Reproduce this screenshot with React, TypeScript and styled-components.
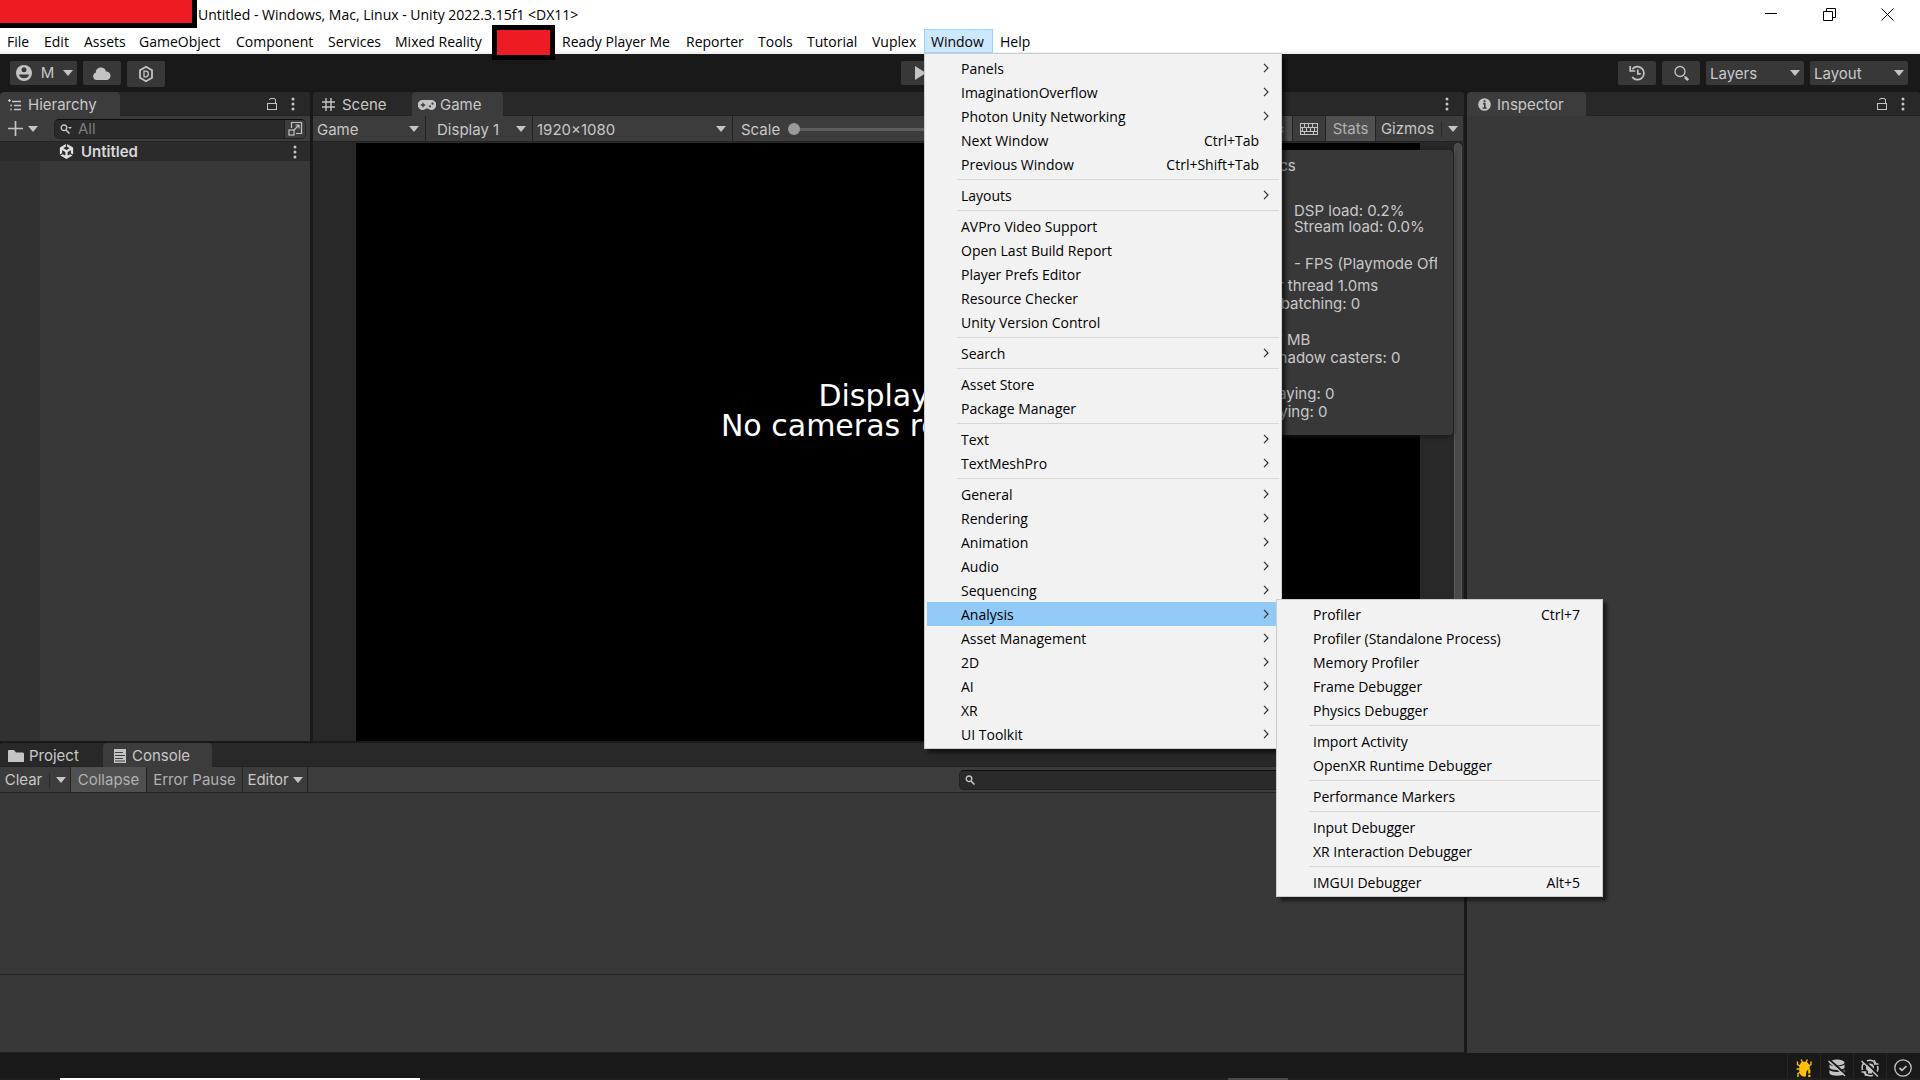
import React from "react";
import styled, { createGlobalStyle } from "styled-components";
import { SiUnity } from "react-icons/si";

const GlobalStyle = createGlobalStyle`
  *, *::before, *::after { box-sizing: border-box; }
  body { margin: 0; background: #191919; }
  button, input, select { font: inherit; color: inherit; margin: 0; padding: 0; border: 0; background: none; }
  ul { margin: 0; padding: 0; list-style: none; }
`;

const systemFont = `"Open Sans", "Noto Sans", sans-serif`;
const editorFont = `Inter, Roboto, sans-serif`;

const Shell = styled.div`
  min-height: 100vh;
  display: flex;
  flex-direction: column;
  overflow: hidden;
  background: #191919;
  color: #c8c8c8;
  font-family: ${editorFont};
  font-size: 15px;
  line-height: 18px;
`;

/* ---------- window chrome ---------- */

const TitleBar = styled.header`
  height: 28px;
  display: flex;
  background: #fff;
  color: #000;
  font-family: ${systemFont};
  font-size: 14px;
`;

const TitleRedaction = styled.div`
  width: 197px;
  height: 28px;
  background: #ed1c24;
  border: solid #000;
  border-width: 0 5px 5px 0;
`;

const WindowTitle = styled.h1`
  flex: 1;
  margin: 0;
  padding-left: 1px;
  font-size: 14px;
  font-weight: 400;
  line-height: 30px;
`;

const WindowButtons = styled.div`
  display: flex;
  padding-right: 4px;
`;

const WindowButton = styled.button`
  width: 58px;
  height: 28px;
  display: grid;
  place-items: center;
`;

const MenuBar = styled.nav`
  height: 26px;
  display: flex;
  background: #fff;
  border-bottom: 2px solid #f0f0f0;
  color: #000;
  font-family: ${systemFont};
  font-size: 14px;
`;

const MenuSlot = styled.div`
  position: relative;
  z-index: 10;
  padding-top: 1px;
`;

const MenuButton = styled.button<{ $width: number; $open?: boolean }>`
  width: ${(p) => p.$width}px;
  height: 24px;
  padding: 1px 0 0 6px;
  text-align: left;
  white-space: nowrap;
  border: 1px solid ${(p) => (p.$open ? "#99d1ff" : "transparent")};
  background: ${(p) => (p.$open ? "#cce8ff" : "transparent")};
`;

const MenuRedaction = styled.div`
  width: 63px;
  height: 35px;
  margin-top: -3px;
  position: relative;
  z-index: 2;
  background: #ed1c24;
  border: 5px solid #000;
`;

const PopupMenu = styled.ul<{ $nested?: boolean }>`
  position: absolute;
  z-index: 20;
  top: ${(p) => (p.$nested ? "-3px" : "25px")};
  left: ${(p) => (p.$nested ? "349px" : "0")};
  width: ${(p) => (p.$nested ? 327 : 358)}px;
  padding: 2px;
  background: #f2f2f2;
  border: 1px solid #ccc;
  box-shadow: 4px 4px 3px rgba(0, 0, 0, 0.5);
`;

const PopupItem = styled.li`
  position: relative;
`;

const PopupButton = styled.button<{ $active?: boolean }>`
  width: 100%;
  height: 24px;
  display: flex;
  align-items: center;
  justify-content: space-between;
  padding: 0 20px 0 34px;
  text-align: left;
  white-space: nowrap;
  background: ${(p) => (p.$active ? "#91c9f7" : "transparent")};

  span { padding-top: 2px; }
  svg { margin-right: -10px; }
`;

const PopupDivider = styled.li`
  height: 1px;
  margin: 3px 0 3px 30px;
  background: #d7d7d7;
`;

/* ---------- editor toolbar ---------- */

const EditorToolbar = styled.div`
  height: 38px;
  display: grid;
  grid-template-columns: 1fr auto 1fr;
  align-items: start;
  padding: 7px 12px 0 10px;
`;

const ToolGroup = styled.div<{ $tight?: boolean; $end?: boolean }>`
  display: flex;
  justify-content: ${(p) => (p.$end ? "flex-end" : "flex-start")};
  gap: ${(p) => (p.$tight ? 1 : 6)}px;
`;

const ToolButton = styled.button<{ $tall?: boolean; $wide?: boolean }>`
  width: ${(p) => (p.$wide ? 67 : 38)}px;
  height: ${(p) => (p.$tall ? 26 : 24)}px;
  display: flex;
  align-items: center;
  justify-content: ${(p) => (p.$wide ? "space-between" : "center")};
  padding: ${(p) => (p.$wide ? "0 4px 0 6px" : "0")};
  background: #383838;
  border-radius: 2px;
`;

const Caret = styled.span`
  width: 0;
  height: 0;
  border: solid transparent;
  border-width: 6px 5px 0;
  border-top-color: #c4c4c4;
`;

const SelectBox = styled.label<{ $width: number; $raised?: boolean }>`
  position: relative;
  width: ${(p) => p.$width}px;
  height: ${(p) => (p.$raised ? "24px" : "100%")};
  display: flex;
  align-items: center;
  background: ${(p) => (p.$raised ? "#383838" : "transparent")};
  border-radius: ${(p) => (p.$raised ? 2 : 0)}px;
  border-right: ${(p) => (p.$raised ? "0" : "1px solid #232323")};

  ${Caret} {
    position: absolute;
    right: ${(p) => (p.$raised ? 4 : 6)}px;
    pointer-events: none;
  }
`;

const Select = styled.select<{ $indent: number }>`
  appearance: none;
  width: 100%;
  height: 100%;
  padding: 2px 0 0 ${(p) => p.$indent}px;
`;

/* ---------- docked panels ---------- */

const Workspace = styled.main`
  flex: 1;
  display: grid;
  grid-template-columns: minmax(0, 1fr) 453px;
  column-gap: 3px;
`;

const DockColumn = styled.div`
  display: flex;
  flex-direction: column;
  gap: 2px;
`;

const UpperDock = styled.div`
  flex: 1;
  display: grid;
  grid-template-columns: 310px minmax(0, 1fr);
  column-gap: 3px;
`;

const Panel = styled.section<{ $height?: number }>`
  ${(p) => (p.$height ? `height: ${p.$height}px;` : "")}
  display: flex;
  flex-direction: column;
  background: #383838;
  border-radius: 4px 4px 0 0;
  overflow: hidden;
`;

const TabStrip = styled.div`
  height: 24px;
  display: flex;
  align-items: flex-end;
  background: #282828;
`;

const Tab = styled.button<{ $width: number; $active?: boolean; $gap?: number; $indent?: number }>`
  width: ${(p) => p.$width}px;
  height: 24px;
  display: flex;
  align-items: center;
  gap: ${(p) => p.$gap ?? 6}px;
  padding: 2px 0 0 ${(p) => p.$indent ?? 8}px;
  white-space: nowrap;
  background: ${(p) => (p.$active ? "#3c3c3c" : "transparent")};
  border-bottom: 1px solid ${(p) => (p.$active ? "#3c3c3c" : "#232323")};
  border-radius: 4px 4px 0 0;
`;

const TabTools = styled.div`
  flex: 1;
  height: 24px;
  display: flex;
  align-items: center;
  justify-content: flex-end;
  gap: 13px;
  padding-right: 15px;
  border-bottom: 1px solid #232323;
`;

const IconButton = styled.button`
  display: flex;
  align-items: center;
  gap: 5px;
`;

const PanelToolbar = styled.div<{ $pad?: number }>`
  height: 26px;
  display: flex;
  align-items: center;
  padding-left: ${(p) => p.$pad ?? 0}px;
  background: #3c3c3c;
  border-bottom: 1px solid #232323;
`;

const SearchField = styled.label`
  flex: 1;
  height: 20px;
  display: flex;
  align-items: center;
  overflow: hidden;
  padding-left: 5px;
  gap: 6px;
  background: #2a2a2a;
  border: 1px solid #212121;
  border-top-color: #0d0d0d;
  border-radius: 5px;

  input { flex: 1; min-width: 0; padding-top: 1px; outline: 0; }
  input::placeholder { color: #7c7c7c; opacity: 1; }
`;

const SearchGap = styled.div`
  width: 4px;
`;

const FieldButton = styled.button`
  width: 21px;
  height: 18px;
  display: grid;
  place-items: center;
  background: #3c3c3c;
  border-left: 1px solid #212121;
`;

const AddButton = styled(IconButton)`
  width: 46px;
`;

const SceneRow = styled.div`
  height: 19px;
  display: flex;
  align-items: center;
  gap: 7px;
  padding: 0 13px 0 59px;
  background: #2b2b2b;
  color: #d8d8d8;
  font-weight: 600;

  span { flex: 1; }
`;

const HierarchyBody = styled.div`
  flex: 1;
  border-left: 40px solid #313131;
`;

const ScaleControl = styled.label`
  flex: 1;
  display: flex;
  align-items: center;
  gap: 8px;
  padding: 2px 0 0 8px;
`;

const Slider = styled.input`
  appearance: none;
  flex: 1;
  max-width: 260px;
  height: 14px;

  &::-webkit-slider-runnable-track {
    height: 3px;
    background: #5e5e5e;
    border-radius: 2px;
  }
  &::-webkit-slider-thumb {
    appearance: none;
    width: 12px;
    height: 12px;
    margin-top: -5px;
    background: #999;
    border-radius: 50%;
  }
`;

const ToolbarToggle = styled.button<{ $width: number; $on?: boolean; $dim?: boolean }>`
  width: ${(p) => p.$width}px;
  height: 25px;
  display: flex;
  align-items: center;
  justify-content: center;
  gap: 4px;
  padding-top: 1px;
  white-space: nowrap;
  color: ${(p) => (p.$on || p.$dim ? "#b0b0b0" : "#c8c8c8")};
  background: ${(p) => (p.$on ? "#505050" : "transparent")};
  border-right: 1px solid #232323;
`;

const SplitRule = styled.span`
  width: 1px;
  height: 15px;
  margin: 0 2px 0 3px;
  background: #2a2a2a;
`;

const GameView = styled.div`
  position: relative;
  flex: 1;
  display: flex;
  padding: 1px 2px 0 43px;
  background: #282828;
`;

const Stage = styled.div`
  flex: 1;
  display: flex;
  flex-direction: column;
  align-items: center;
  justify-content: center;
  padding-bottom: 62px;
  margin-right: 34px;
  background: #000;
  color: #fff;
  font-family: "DejaVu Sans", sans-serif;
  font-size: 30px;
  line-height: 30px;
`;

const ScrollBar = styled.div`
  width: 8px;
  background: #4a4a4a;
  border: 1px solid #555;
  border-radius: 4px 4px 0 0;
`;

const StatsOverlay = styled.aside`
  position: absolute;
  top: 8px;
  right: 11px;
  width: 375px;
  height: 285px;
  padding: 7px 16px 0 12px;
  background: #383838;
  border-radius: 4px;
  box-shadow: 0 1px 5px #181818;
`;

const StatsTitle = styled.h2`
  margin: 0 0 28px;
  font-size: 15px;
  font-weight: 400;
  text-align: center;
`;

const StatsBlock = styled.div<{ $top?: number; $dense?: boolean }>`
  padding-top: ${(p) => p.$top ?? 0}px;
  line-height: ${(p) => (p.$dense ? 16 : 18)}px;
`;

const StatsLine = styled.div<{ $indent: number }>`
  padding-left: ${(p) => p.$indent}px;
  white-space: nowrap;
  overflow: hidden;
`;

const ConsoleBody = styled.div`
  flex: 1;
`;

const ConsoleDetail = styled.div`
  height: 79px;
  border-top: 1px solid #232323;
  border-bottom: 1px solid #232323;
`;

const ConsoleSearch = styled.div`
  width: 505px;
  display: flex;
  margin-left: auto;
  padding-right: 100px;
`;

/* ---------- status bar ---------- */

const StatusBar = styled.footer`
  height: 25px;
  display: flex;
  justify-content: flex-end;
  padding-right: 1px;
`;

const StatusButton = styled.button`
  width: 33px;
  display: grid;
  place-items: center;
  padding-top: 4px;
  border-left: 1px solid #252525;
`;

const TaskbarEdge = styled.div`
  height: 2px;
  display: flex;
  gap: 808px;
  padding-left: 60px;
  background: #231f20;
`;

const TaskbarPiece = styled.span<{ $width: number; $color: string }>`
  width: ${(p) => p.$width}px;
  background: ${(p) => p.$color};
`;

/* ---------- icons ---------- */

const ink = "#c4c4c4";

const Icon = ({ w, h = w, box, children }: { w: number; h?: number; box?: string; children: React.ReactNode }) => (
  <svg width={w} height={h} viewBox={box ?? `0 0 ${w} ${h}`} fill="none" stroke={ink} aria-hidden="true">
    {children}
  </svg>
);

const Dots = () => (
  <Icon w={4} h={14}>
    <g fill={ink} stroke="none">
      <circle cx="2" cy="2" r="1.5" /><circle cx="2" cy="7" r="1.5" /><circle cx="2" cy="12" r="1.5" />
    </g>
  </Icon>
);

const Lock = () => (
  <Icon w={12} h={14}>
    <rect x="1.5" y="6.5" width="9" height="6" />
    <path d="M9.500 6V3A1.500 1.500 0 0 0 8 1.500H5A1.500 1.500 0 0 0 3.500 3" />
  </Icon>
);

const Account = () => (
  <Icon w={16}>
    <circle cx="8" cy="8" r="8" fill={ink} stroke="none" />
    <circle cx="8" cy="4.800" r="2.500" fill="#383838" stroke="none" />
    <path d="M3 9.500h10c0 2-2 3.800-5 3.800S3 11.500 3 9.500Z" fill="#383838" stroke="none" />
  </Icon>
);

const Cloud = () => (
  <Icon w={20} h={15}>
    <path d="M4.500 14a3.700 3.700 0 0 1-.8-7.200C3.900 3.300 6.300 1.500 9 1.500c2.600 0 4.400 1.500 5 4 2.800 0 4.500 1.800 4.500 4.200S16.800 14 14.500 14Z" fill={ink} stroke="none" />
  </Icon>
);

const HexD = () => (
  <Icon w={16} h={18}>
    <path d="M8 1.800 14 5.200v7.600L8 16.200 2 12.800V5.200Z" strokeWidth="1.800" />
    <path d="M6 6.200h1.800C9.400 6.200 10.300 7.300 10.300 9s-.9 2.800-2.500 2.800H6Z" strokeWidth="1.300" />
  </Icon>
);

const Play = () => (
  <Icon w={13} h={14}><path d="M1 0 12 7 1 14Z" fill={ink} stroke="none" /></Icon>
);

const Pause = () => (
  <Icon w={12} h={14}><path d="M3 1v12M9 1v12" strokeWidth="3" /></Icon>
);

const Step = () => (
  <Icon w={14} h={14}>
    <path d="M1 0 10 7 1 14Z" fill={ink} stroke="none" /><path d="M12 0v14" strokeWidth="2" />
  </Icon>
);

const History = () => (
  <Icon w={17} h={16}>
    <path d="M3.300 4.200A6.500 6.500 0 1 1 3.200 12" strokeWidth="1.700" />
    <path d="M1.200 1v5h5" strokeWidth="1.700" />
    <path d="M8.800 4.500v4.300h3" strokeWidth="1.700" />
  </Icon>
);

const Magnifier = () => (
  <Icon w={17} h={17}>
    <circle cx="7" cy="6.500" r="5" strokeWidth="1.300" />
    <path d="m10.500 10.500 1.200 1.200" /><path d="m12 12 3.200 3.200" strokeWidth="2.600" />
  </Icon>
);

const SmallMagnifier = ({ menu }: { menu?: boolean }) => (
  <Icon w={12} h={10}>
    <circle cx="4" cy="3.800" r="2.800" strokeWidth="1.400" />
    <path d="m6 6 3.500 3.500" strokeWidth="1.600" />
    {menu && <path d="M8 3h4l-2 2Z" fill={ink} stroke="none" />}
  </Icon>
);

const HierarchyIcon = () => (
  <Icon w={14} h={12}>
    <path d="M4 2.500h9M6 6.500h7M6 10.500h7" strokeWidth="1.400" />
    <path d="M0 1.500h3M1.500 0v3M3 5.500v2M4 6.500H3M3 9.500v2" strokeWidth="1.200" />
  </Icon>
);

const GridIcon = () => (
  <Icon w={13}><path d="M4 0v13M9 0v13M0 4h13M0 9h13" strokeWidth="1.400" /></Icon>
);

const Gamepad = () => (
  <Icon w={18} h={10}>
    <path d="M5 0h8a5 5 0 1 1-3.200 8.500H8.200A5 5 0 1 1 5 0Z" fill={ink} stroke="none" />
    <path d="M5 2.800v4.400M2.800 5h4.400" stroke="#3c3c3c" strokeWidth="1.300" />
    <circle cx="12" cy="6.300" r="1.100" fill="#3c3c3c" stroke="none" />
    <circle cx="14.500" cy="3.700" r="1.100" fill="#3c3c3c" stroke="none" />
  </Icon>
);

const InfoIcon = () => (
  <Icon w={13}>
    <circle cx="6.500" cy="6.500" r="6.300" fill={ink} stroke="none" />
    <path d="M6.500 2.200v2" stroke="#3c3c3c" strokeWidth="2" />
    <path d="M5 5.700h1.800V10M4.600 10h4" stroke="#3c3c3c" strokeWidth="1.600" />
  </Icon>
);

const Plus = () => (
  <Icon w={15}><path d="M7.500 0v15M0 7.500h15" strokeWidth="1.700" /></Icon>
);

const PickerIcon = () => (
  <Icon w={15}>
    <path d="M3.500 7V1.500h10v11H8" strokeWidth="1.200" />
    <rect x="1" y="9" width="5" height="5" strokeWidth="1.200" />
    <path d="m6 9 5-5M7.500 4H11v3.500" strokeWidth="1.200" />
  </Icon>
);

const MuteIcon = () => (
  <Icon w={20} h={14}>
    <path d="M1 5h3l5-4v12l-5-4H1Z" fill={ink} stroke="none" />
    <path d="m13 5 5 5M18 5l-5 5" strokeWidth="1.400" />
  </Icon>
);

const KeyboardIcon = () => (
  <Icon w={18} h={12}>
    <rect x="0.500" y="0.500" width="17" height="11" />
    <path d="M0 4.500h18M0 8.500h18M4.500 0v4M8.500 0v4M12.500 0v4M2.500 4v4M6.500 4v4M10.500 4v4M14.500 4v4M4.500 8v4M13.500 8v4" />
  </Icon>
);

const FolderIcon = () => (
  <Icon w={16} h={12}>
    <path d="M0 1.200C0 .5.500 0 1.200 0H6l2 2.500h6.500c.8 0 1.500.6 1.500 1.400V12H0Z" fill={ink} stroke="none" />
  </Icon>
);

const ConsoleIcon = () => (
  <Icon w={12} h={14}>
    <rect width="12" height="14" fill={ink} stroke="none" />
    <path d="M1 3.500h8M1 6.500h10M1 9.500h8M1 12h10" stroke="#3c3c3c" strokeWidth="1.200" />
  </Icon>
);

const Chevron = () => (
  <Icon w={6} h={10}><path d="m1 .8 4 4.200-4 4.200" stroke="#333" strokeWidth="1.200" /></Icon>
);

const BugIcon = () => (
  <Icon w={17} h={18}>
    <g stroke="#ffc107" strokeWidth="1.400">
      <path d="M5 .5 6.500 3M11.500.5 10 3M4 7 1.500 5.500V2.500M12.500 7 15 5.500V2.500M4 10H.500M4 13l-2 1.500V18" />
      <path d="M6 3.500h4.500l2.500 3V10c-2.500 0-3.500 2-3.500 4.500 0 1 0 2-.5 2.500-3.500 0-5-2.500-5-5v-5.500Z" fill="#ffc107" />
      <path d="M13.300 10.500v4M13.300 15.800V18" strokeWidth="2.200" />
    </g>
  </Icon>
);

const DatabaseOff = () => (
  <Icon w={18} h={18}>
    <g fill={ink} stroke="none">
      <ellipse cx="9" cy="3.500" rx="7.500" ry="3" />
      <path d="M1.500 5.500c2 2.500 13 2.500 15 0V9c-2 2.500-13 2.500-15 0Z" />
      <path d="M1.500 11c2 2.500 13 2.500 15 0v3.500c-2 3-13 3-15 0Z" />
    </g>
    <path d="m2.500 1.500 15.500 14" stroke="#191919" strokeWidth="2" />
    <path d="m.5 2 16.500 15" strokeWidth="1.400" />
  </Icon>
);

const LightOff = () => (
  <Icon w={18} h={18}>
    <path d="M6 1.800a8 8 0 0 1 9 2.700M16.500 7a8 8 0 0 1-1.200 7M12 16.200a8 8 0 0 1-9-2.700M1.500 11a8 8 0 0 1 1.200-7" strokeWidth="1.600" />
    <path d="M9 4.500a4 4 0 0 1 2 7.500v2.500H7V12a4 4 0 0 1 2-7.500Z" fill={ink} stroke="none" />
    <path d="M13.500 1v4h4M4.500 17v-4h-4" strokeWidth="1.400" />
    <path d="m2.500 1.500 15.500 14" stroke="#191919" strokeWidth="2" />
    <path d="m.5 2 16.500 15.500" strokeWidth="1.500" />
  </Icon>
);

const CheckIcon = () => (
  <Icon w={18} h={18}>
    <circle cx="9" cy="9" r="8.200" strokeWidth="1.300" />
    <path d="m5.500 8.800 2.500 2.500 4.500-4.300" strokeWidth="1.700" />
  </Icon>
);

/* ---------- data ---------- */

type Entry = { label: string; keys?: string; sub?: boolean; children?: Entry[][] };

const sub = (...labels: string[]): Entry[] => labels.map((label) => ({ label, sub: true }));
const plain = (...labels: string[]): Entry[] => labels.map((label) => ({ label }));

const analysisMenu: Entry[][] = [
  [{ label: "Profiler", keys: "Ctrl+7" }, ...plain("Profiler (Standalone Process)", "Memory Profiler", "Frame Debugger", "Physics Debugger")],
  plain("Import Activity", "OpenXR Runtime Debugger"),
  plain("Performance Markers"),
  plain("Input Debugger", "XR Interaction Debugger"),
  [{ label: "IMGUI Debugger", keys: "Alt+5" }],
];

const windowMenu: Entry[][] = [
  [
    ...sub("Panels", "ImaginationOverflow", "Photon Unity Networking"),
    { label: "Next Window", keys: "Ctrl+Tab" },
    { label: "Previous Window", keys: "Ctrl+Shift+Tab" },
  ],
  sub("Layouts"),
  plain("AVPro Video Support", "Open Last Build Report", "Player Prefs Editor", "Resource Checker", "Unity Version Control"),
  sub("Search"),
  plain("Asset Store", "Package Manager"),
  sub("Text", "TextMeshPro"),
  [
    ...sub("General", "Rendering", "Animation", "Audio", "Sequencing"),
    { label: "Analysis", sub: true, children: analysisMenu },
    ...sub("Asset Management", "2D", "AI", "XR", "UI Toolkit"),
  ],
];

const menusBefore: [string, number][] = [
  ["File", 37], ["Edit", 40], ["Assets", 55], ["GameObject", 97], ["Component", 92], ["Services", 67], ["Mixed Reality", 104],
];
const menusAfter: [string, number][] = [
  ["Ready Player Me", 124], ["Reporter", 72], ["Tools", 49], ["Tutorial", 65], ["Vuplex", 59],
];

/* ---------- composed parts ---------- */

function Popup({ groups, nested }: { groups: Entry[][]; nested?: boolean }) {
  return (
    <PopupMenu $nested={nested}>
      {groups.map((group, i) => (
        <React.Fragment key={i}>
          {i > 0 && <PopupDivider role="separator" />}
          {group.map((e) => (
            <PopupItem key={e.label}>
              <PopupButton $active={!!e.children}>
                <span>{e.label}</span>
                {e.keys && <span>{e.keys}</span>}
                {e.sub && <Chevron />}
              </PopupButton>
              {e.children && <Popup groups={e.children} nested />}
            </PopupItem>
          ))}
        </React.Fragment>
      ))}
    </PopupMenu>
  );
}

function Dropdown({ name, value, width, indent = 3, raised }: { name: string; value: string; width: number; indent?: number; raised?: boolean }) {
  return (
    <SelectBox $width={width} $raised={raised}>
      <Select $indent={indent} aria-label={name} defaultValue={value}>
        <option>{value}</option>
      </Select>
      <Caret />
    </SelectBox>
  );
}

function Chrome() {
  return (
    <>
      <TitleBar>
        <TitleRedaction />
        <WindowTitle>Untitled - Windows, Mac, Linux - Unity 2022.3.15f1 &lt;DX11&gt;</WindowTitle>
        <WindowButtons>
          <WindowButton aria-label="Minimize">
            <Icon w={12}><path d="M0 5.500h12" stroke="#000" /></Icon>
          </WindowButton>
          <WindowButton aria-label="Restore">
            <Icon w={13}><path d="M.5 3.500h9v9h-9ZM3.500 3V.5h9v9H10" stroke="#000" /></Icon>
          </WindowButton>
          <WindowButton aria-label="Close">
            <Icon w={13}><path d="m.5.5 12 12M12.500.5l-12 12" stroke="#000" /></Icon>
          </WindowButton>
        </WindowButtons>
      </TitleBar>
      <MenuBar>
        {menusBefore.map(([label, width]) => (
          <MenuSlot key={label}><MenuButton $width={width}>{label}</MenuButton></MenuSlot>
        ))}
        <MenuRedaction />
        {menusAfter.map(([label, width]) => (
          <MenuSlot key={label}><MenuButton $width={width}>{label}</MenuButton></MenuSlot>
        ))}
        <MenuSlot>
          <MenuButton $width={69} $open>Window</MenuButton>
          <Popup groups={windowMenu} />
        </MenuSlot>
        <MenuSlot><MenuButton $width={50}>Help</MenuButton></MenuSlot>
      </MenuBar>
    </>
  );
}

function Toolbar() {
  return (
    <EditorToolbar>
      <ToolGroup>
        <ToolButton $wide><Account /><span>M</span><Caret /></ToolButton>
        <ToolButton aria-label="Cloud"><Cloud /></ToolButton>
        <ToolButton $tall aria-label="DevOps"><HexD /></ToolButton>
      </ToolGroup>
      <ToolGroup $tight>
        <ToolButton aria-label="Play"><Play /></ToolButton>
        <ToolButton aria-label="Pause"><Pause /></ToolButton>
        <ToolButton aria-label="Step"><Step /></ToolButton>
      </ToolGroup>
      <ToolGroup $end>
        <ToolButton aria-label="Undo history"><History /></ToolButton>
        <ToolButton aria-label="Search"><Magnifier /></ToolButton>
        <Dropdown name="Layers" value="Layers" width={98} indent={4} raised />
        <Dropdown name="Layout" value="Layout" width={98} indent={4} raised />
      </ToolGroup>
    </EditorToolbar>
  );
}

function Hierarchy() {
  return (
    <Panel>
      <TabStrip>
        <Tab $width={120} $active><HierarchyIcon />Hierarchy</Tab>
        <TabTools>
          <IconButton aria-label="Lock"><Lock /></IconButton>
          <IconButton aria-label="Options"><Dots /></IconButton>
        </TabTools>
      </TabStrip>
      <PanelToolbar $pad={8}>
        <AddButton aria-label="Create"><Plus /><Caret /></AddButton>
        <SearchField>
          <SmallMagnifier menu />
          <input aria-label="Search hierarchy" placeholder="All" />
          <FieldButton aria-label="Search window"><PickerIcon /></FieldButton>
        </SearchField>
        <SearchGap />
      </PanelToolbar>
      <SceneRow>
        <SiUnity size={15} color="#e0e0e0" />
        <span>Untitled</span>
        <IconButton aria-label="Scene options"><Dots /></IconButton>
      </SceneRow>
      <HierarchyBody />
    </Panel>
  );
}

function Stats() {
  return (
    <StatsOverlay>
      <StatsTitle>Statistics</StatsTitle>
      <StatsBlock $dense>
        <StatsLine $indent={204}>DSP load: 0.2%</StatsLine>
        <StatsLine $indent={204}>Stream load: 0.0%</StatsLine>
      </StatsBlock>
      <StatsBlock $top={20}>
        <StatsLine $indent={204}>- FPS (Playmode Off)</StatsLine>
      </StatsBlock>
      <StatsBlock $top={4}>
        <StatsLine $indent={147}>render thread 1.0ms</StatsLine>
        <StatsLine $indent={121}>Saved by batching: 0</StatsLine>
      </StatsBlock>
      <StatsBlock $top={18}>
        <StatsLine $indent={162}>23.7 MB</StatsLine>
        <StatsLine $indent={179}>Shadow casters: 0</StatsLine>
      </StatsBlock>
      <StatsBlock $top={18}>
        <StatsLine $indent={8}>Animation components playing: 0</StatsLine>
        <StatsLine $indent={8}>Animator components playing: 0</StatsLine>
      </StatsBlock>
    </StatsOverlay>
  );
}

function Game() {
  return (
    <Panel>
      <TabStrip>
        <Tab $width={99} $gap={7} $indent={9}><GridIcon />Scene</Tab>
        <Tab $width={91} $active $gap={4} $indent={6}><Gamepad />Game</Tab>
        <TabTools><IconButton aria-label="Options"><Dots /></IconButton></TabTools>
      </TabStrip>
      <PanelToolbar>
        <Dropdown name="View" value="Game" width={113} indent={4} />
        <Dropdown name="Display" value="Display 1" width={107} indent={11} />
        <Dropdown name="Resolution" value="1920x1080" width={200} indent={4} />
        <ScaleControl>
          Scale
          <Slider type="range" min="1" max="5" step="0.1" defaultValue="1" />
        </ScaleControl>
        <ToolbarToggle $width={36} $on aria-label="Mute audio"><MuteIcon /></ToolbarToggle>
        <ToolbarToggle $width={33} aria-label="Shortcuts"><KeyboardIcon /></ToolbarToggle>
        <ToolbarToggle $width={50} $on>Stats</ToolbarToggle>
        <ToolbarToggle $width={88}>Gizmos<SplitRule /><Caret /></ToolbarToggle>
      </PanelToolbar>
      <GameView>
        <Stage>
          <div>Display 1</div>
          <div>No cameras rendering</div>
        </Stage>
        <ScrollBar />
        <Stats />
      </GameView>
    </Panel>
  );
}

function Console() {
  return (
    <Panel $height={310}>
      <TabStrip>
        <Tab $width={103} $gap={5} $indent={8}><FolderIcon />Project</Tab>
        <Tab $width={109} $active $indent={11}><ConsoleIcon />Console</Tab>
        <TabTools />
      </TabStrip>
      <PanelToolbar $pad={1}>
        <ToolbarToggle $width={70}>Clear<SplitRule /><Caret /></ToolbarToggle>
        <ToolbarToggle $width={76} $on>Collapse</ToolbarToggle>
        <ToolbarToggle $width={96} $dim>Error Pause</ToolbarToggle>
        <ToolbarToggle $width={65}>Editor<Caret /></ToolbarToggle>
        <ConsoleSearch>
          <SearchField>
            <SmallMagnifier />
            <input aria-label="Search console" />
          </SearchField>
        </ConsoleSearch>
      </PanelToolbar>
      <ConsoleBody />
      <ConsoleDetail />
    </Panel>
  );
}

export default function App() {
  return (
    <Shell>
      <GlobalStyle />
      <Chrome />
      <Toolbar />
      <Workspace>
        <DockColumn>
          <UpperDock>
            <Hierarchy />
            <Game />
          </UpperDock>
          <Console />
        </DockColumn>
        <Panel>
          <TabStrip>
            <Tab $width={119} $active $indent={11}><InfoIcon />Inspector</Tab>
            <TabTools>
              <IconButton aria-label="Lock"><Lock /></IconButton>
              <IconButton aria-label="Options"><Dots /></IconButton>
            </TabTools>
          </TabStrip>
        </Panel>
      </Workspace>
      <StatusBar>
        <StatusButton aria-label="Debug mode"><BugIcon /></StatusButton>
        <StatusButton aria-label="Cache server"><DatabaseOff /></StatusButton>
        <StatusButton aria-label="Auto lighting"><LightOff /></StatusButton>
        <StatusButton aria-label="Progress"><CheckIcon /></StatusButton>
      </StatusBar>
      <TaskbarEdge>
        <TaskbarPiece $width={360} $color="#fff" />
        <TaskbarPiece $width={60} $color="#4a4a4a" />
      </TaskbarEdge>
    </Shell>
  );
}
